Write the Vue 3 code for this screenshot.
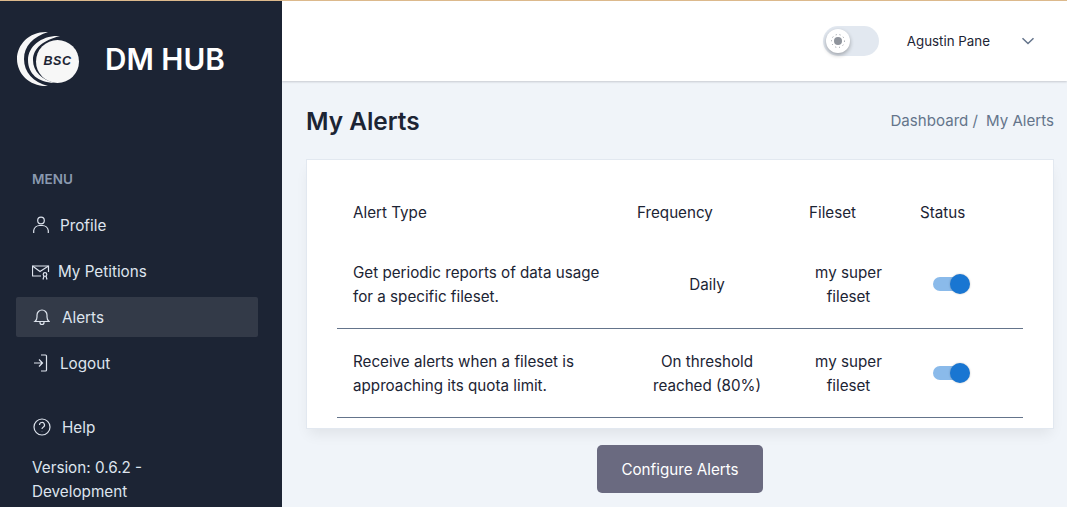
<script setup>
const menuItems = [
  { label: 'Profile', icon: 'user' },
  { label: 'My Petitions', icon: 'mail' },
  { label: 'Alerts', icon: 'bell', active: true },
  { label: 'Logout', icon: 'logout' },
]

const alerts = [
  { type: 'Get periodic reports of data usage for a specific fileset.', frequency: 'Daily', fileset: 'my super fileset' },
  { type: 'Receive alerts when a fileset is approaching its quota limit.', frequency: 'On threshold reached (80%)', fileset: 'my super fileset' },
]
</script>

<template>
  <div class="app">
    <aside class="sidebar">
      <div class="brand">
        <svg class="logo" width="64" height="56" viewBox="0 0 64 56">
          <path d="M32 1C14 0 1 13 1 28S14 56 32 55C17 51 8 41 8 28S17 6 32 1Z" fill="#f7f7f7" />
          <path d="M44 5C26 4 12 15 12 29S22 51 38 52C26 48 17 41 17 29S28 9 44 5Z" fill="#f7f7f7" />
          <circle cx="41.500" cy="30.500" r="21.500" fill="#f7f7f7" />
          <text x="41.500" y="34" class="logo-text" text-anchor="middle">BSC</text>
        </svg>
        <span class="brand-name">DM HUB</span>
      </div>

      <div class="menu-title">MENU</div>
      <nav class="menu">
        <a v-for="item in menuItems" :key="item.label" class="menu-item" :class="[{ active: item.active }, 'item-' + item.icon]">
          <svg v-if="item.icon === 'user'" width="18" height="20" viewBox="0 0 18 20" class="ico">
            <circle cx="9" cy="5.500" r="3.300" />
            <path d="M1.700 18v-2.500a6 6 0 0 1 6-5h2.600a6 6 0 0 1 6 5V18" />
          </svg>
          <svg v-else-if="item.icon === 'mail'" width="20" height="18" viewBox="0 0 20 18" class="ico">
            <path d="M9 14H.5V4h16v6" />
            <path d="M.5 4L8 9.500 16.500 4" />
            <circle cx="13" cy="12.500" r="1.800" />
            <path d="M11 17.500l1-3.300M15 17.500l-1-3.300" />
          </svg>
          <svg v-else-if="item.icon === 'bell'" width="18" height="20" viewBox="0 0 18 20" class="ico">
            <path d="M3 14.500c1.500-1.200 2-2.300 2-4.500V8a5 5 0 0 1 10 0v2c0 2.200.5 3.300 2 4.500Z" />
            <path d="M8 15v.5a2 2 0 0 0 4 0V15" />
          </svg>
          <svg v-else width="18" height="20" viewBox="0 0 18 20" class="ico">
            <path d="M9 2h4.500a1 1 0 0 1 1 1v14a1 1 0 0 1-1 1H9" />
            <path d="M2 10h8M7 6.500l3.500 3.500L7 13.500" />
          </svg>
          <span>{{ item.label }}</span>
        </a>
      </nav>

      <a class="menu-item help">
        <svg width="20" height="20" viewBox="0 0 20 20" class="ico">
          <circle cx="10" cy="10" r="8" />
          <path d="M7.500 8a2.500 2.500 0 1 1 3.600 2.200c-.8.400-1.100.900-1.100 1.800" />
          <path d="M10 14.200v.3" />
        </svg>
        <span>Help</span>
      </a>
      <div class="version">Version: 0.6.2 - Development</div>
    </aside>

    <div class="main">
      <header class="topbar">
        <div class="theme-toggle">
          <span class="theme-knob">
            <svg width="16" height="16" viewBox="0 0 16 16">
              <circle cx="8" cy="8" r="4" fill="#8f949c" />
              <g stroke="#8f949c" stroke-width="1" stroke-dasharray="1 2.930" fill="none">
                <circle cx="8" cy="8" r="6.500" />
              </g>
            </svg>
          </span>
        </div>
        <span class="user-name">Agustin Pane</span>
        <svg class="chevron" width="14" height="8" viewBox="0 0 14 8">
          <path d="M1.500 1.200L7 6.500l5.500-5.300" />
        </svg>
      </header>

      <main class="content">
        <div class="page-head">
          <h1>My Alerts</h1>
          <div class="breadcrumb"><span>Dashboard /</span><span>My Alerts</span></div>
        </div>

        <section class="card">
          <table>
            <thead>
              <tr>
                <th class="col-type">Alert Type</th>
                <th class="col-freq">Frequency</th>
                <th class="col-file">Fileset</th>
                <th class="col-status">Status</th>
              </tr>
            </thead>
            <tbody>
              <tr v-for="a in alerts" :key="a.type">
                <td class="col-type">{{ a.type }}</td>
                <td class="col-freq center">{{ a.frequency }}</td>
                <td class="col-file center">{{ a.fileset }}</td>
                <td class="col-status">
                  <span class="switch"><span class="switch-knob"></span></span>
                </td>
              </tr>
            </tbody>
          </table>
        </section>

        <div class="actions">
          <button class="configure">Configure Alerts</button>
        </div>
      </main>
    </div>
  </div>
</template>

<style>
html, body {
  margin: 0;
  height: 100%;
  overflow: hidden;
}
</style>

<style scoped>
.app {
  display: flex;
  width: 1067px;
  height: 507px;
  overflow: hidden;
  box-sizing: border-box;
  border-top: 1px solid #dcb98c;
  font-family: Inter, "Liberation Sans", sans-serif;
  background: #f0f4f9;
  color: #1c2434;
}

/* sidebar */
.sidebar {
  width: 282px;
  flex-shrink: 0;
  box-sizing: border-box;
  background: #1c2434;
  padding: 0 24px 0 16px;
  color: #dee4ee;
  font-size: 15.250px;
}

.brand {
  display: flex;
  align-items: center;
  height: 116px;
  gap: 24px;
}

.brand-name {
  color: #fff;
  font-size: 29.700px;
  font-weight: 600;
  margin-left: 1px;
}

.logo-text {
  font-family: "Liberation Sans", sans-serif;
  font-size: 12.500px;
  font-weight: 700;
  font-style: italic;
  letter-spacing: .6px;
  fill: #1c2434;
}

.menu-title {
  margin: 53px 0 0 16px;
  font-size: 13.500px;
  font-weight: 600;
  line-height: 18px;
  color: #8a99af;
}

.menu {
  margin-top: 17px;
  display: flex;
  flex-direction: column;
  gap: 6px;
}

.menu-item {
  display: flex;
  align-items: center;
  height: 40px;
  padding-left: 16px;
  gap: 10px;
  border-radius: 2px;
}

.menu-item.active {
  background: #333a48;
}

.item-mail {
  gap: 6px;
}

.item-bell {
  gap: 12px;
}

.help {
  margin-top: 24px;
  gap: 10px;
}

.ico {
  fill: none;
  stroke: #dee4ee;
  stroke-width: 1.200;
  flex-shrink: 0;
}

.version {
  margin: 9px 0 0 16px;
  width: 150px;
  line-height: 24px;
}

/* main */
.main {
  flex: 1;
  min-width: 0;
  display: flex;
  flex-direction: column;
}

.topbar {
  height: 80px;
  flex-shrink: 0;
  box-sizing: border-box;
  background: #fff;
  box-shadow: 0 1px 2px rgba(28, 36, 52, .2);
  display: flex;
  align-items: center;
  justify-content: flex-end;
  padding-right: 32px;
}

.theme-toggle {
  width: 56px;
  height: 30px;
  border-radius: 15px;
  background: #e2e8f0;
  display: flex;
  align-items: center;
  margin-right: 28px;
}

.theme-knob {
  width: 24px;
  height: 24px;
  margin-left: 3px;
  border-radius: 50%;
  background: #fff;
  box-shadow: 0 2px 4px rgba(0, 0, 0, .3);
  display: flex;
  align-items: center;
  justify-content: center;
}

.user-name {
  font-size: 13.350px;
  margin-right: 31px;
}

.chevron {
  fill: none;
  stroke: #64748b;
  stroke-width: 1.500;
}

.content {
  flex: 1;
  padding: 0 13px 0 24px;
}

.page-head {
  height: 78px;
  display: flex;
  align-items: center;
  justify-content: space-between;
}

.page-head h1 {
  margin: 2px 0 0;
  font-size: 24.400px;
  font-weight: 600;
  color: #1c2434;
}

.breadcrumb {
  display: flex;
  gap: 8px;
  font-size: 15.100px;
  color: #64748b;
}

.card {
  height: 270px;
  box-sizing: border-box;
  background: #fff;
  box-shadow: 0 8px 13px -3px rgba(0, 0, 0, .07);
  border: 1px solid #e2e8f0;
  padding: 29px 30px 0;
}

table {
  width: 686px;
  border-collapse: collapse;
  table-layout: fixed;
  font-size: 15.200px;
  line-height: 24px;
}

th {
  font-weight: 400;
  height: 51px;
  padding: 0 0 3px;
  box-sizing: border-box;
  text-align: left;
}

td {
  height: 88px;
  padding: 0;
  border-bottom: 1px solid #64748b;
}

td.col-type,
td.center {
  padding-top: 2px;
  box-sizing: border-box;
}

.col-type {
  width: 300px;
  padding-left: 16px;
  padding-right: 32px;
  box-sizing: border-box;
}

.col-freq { width: 172px; }
.col-file { width: 111px; }
.col-status { width: 103px; }

td.center {
  text-align: center;
  padding-right: 32px;
}

.switch {
  display: block;
  position: relative;
  width: 36px;
  height: 14px;
  margin-left: 13px;
  border-radius: 7px;
  background: #8abaea;
}

.switch-knob {
  position: absolute;
  right: -1px;
  top: -3px;
  width: 20px;
  height: 20px;
  border-radius: 50%;
  background: #1976d2;
  box-shadow: 0 0 2px rgba(0, 0, 0, .25);
}

.actions {
  display: flex;
  justify-content: center;
  margin-top: 16px;
}

.configure {
  width: 166px;
  height: 48px;
  border: 0;
  border-radius: 5px;
  background: #6a6a80;
  color: #fff;
  font: 400 15.200px Inter, "Liberation Sans", sans-serif;
}
</style>
